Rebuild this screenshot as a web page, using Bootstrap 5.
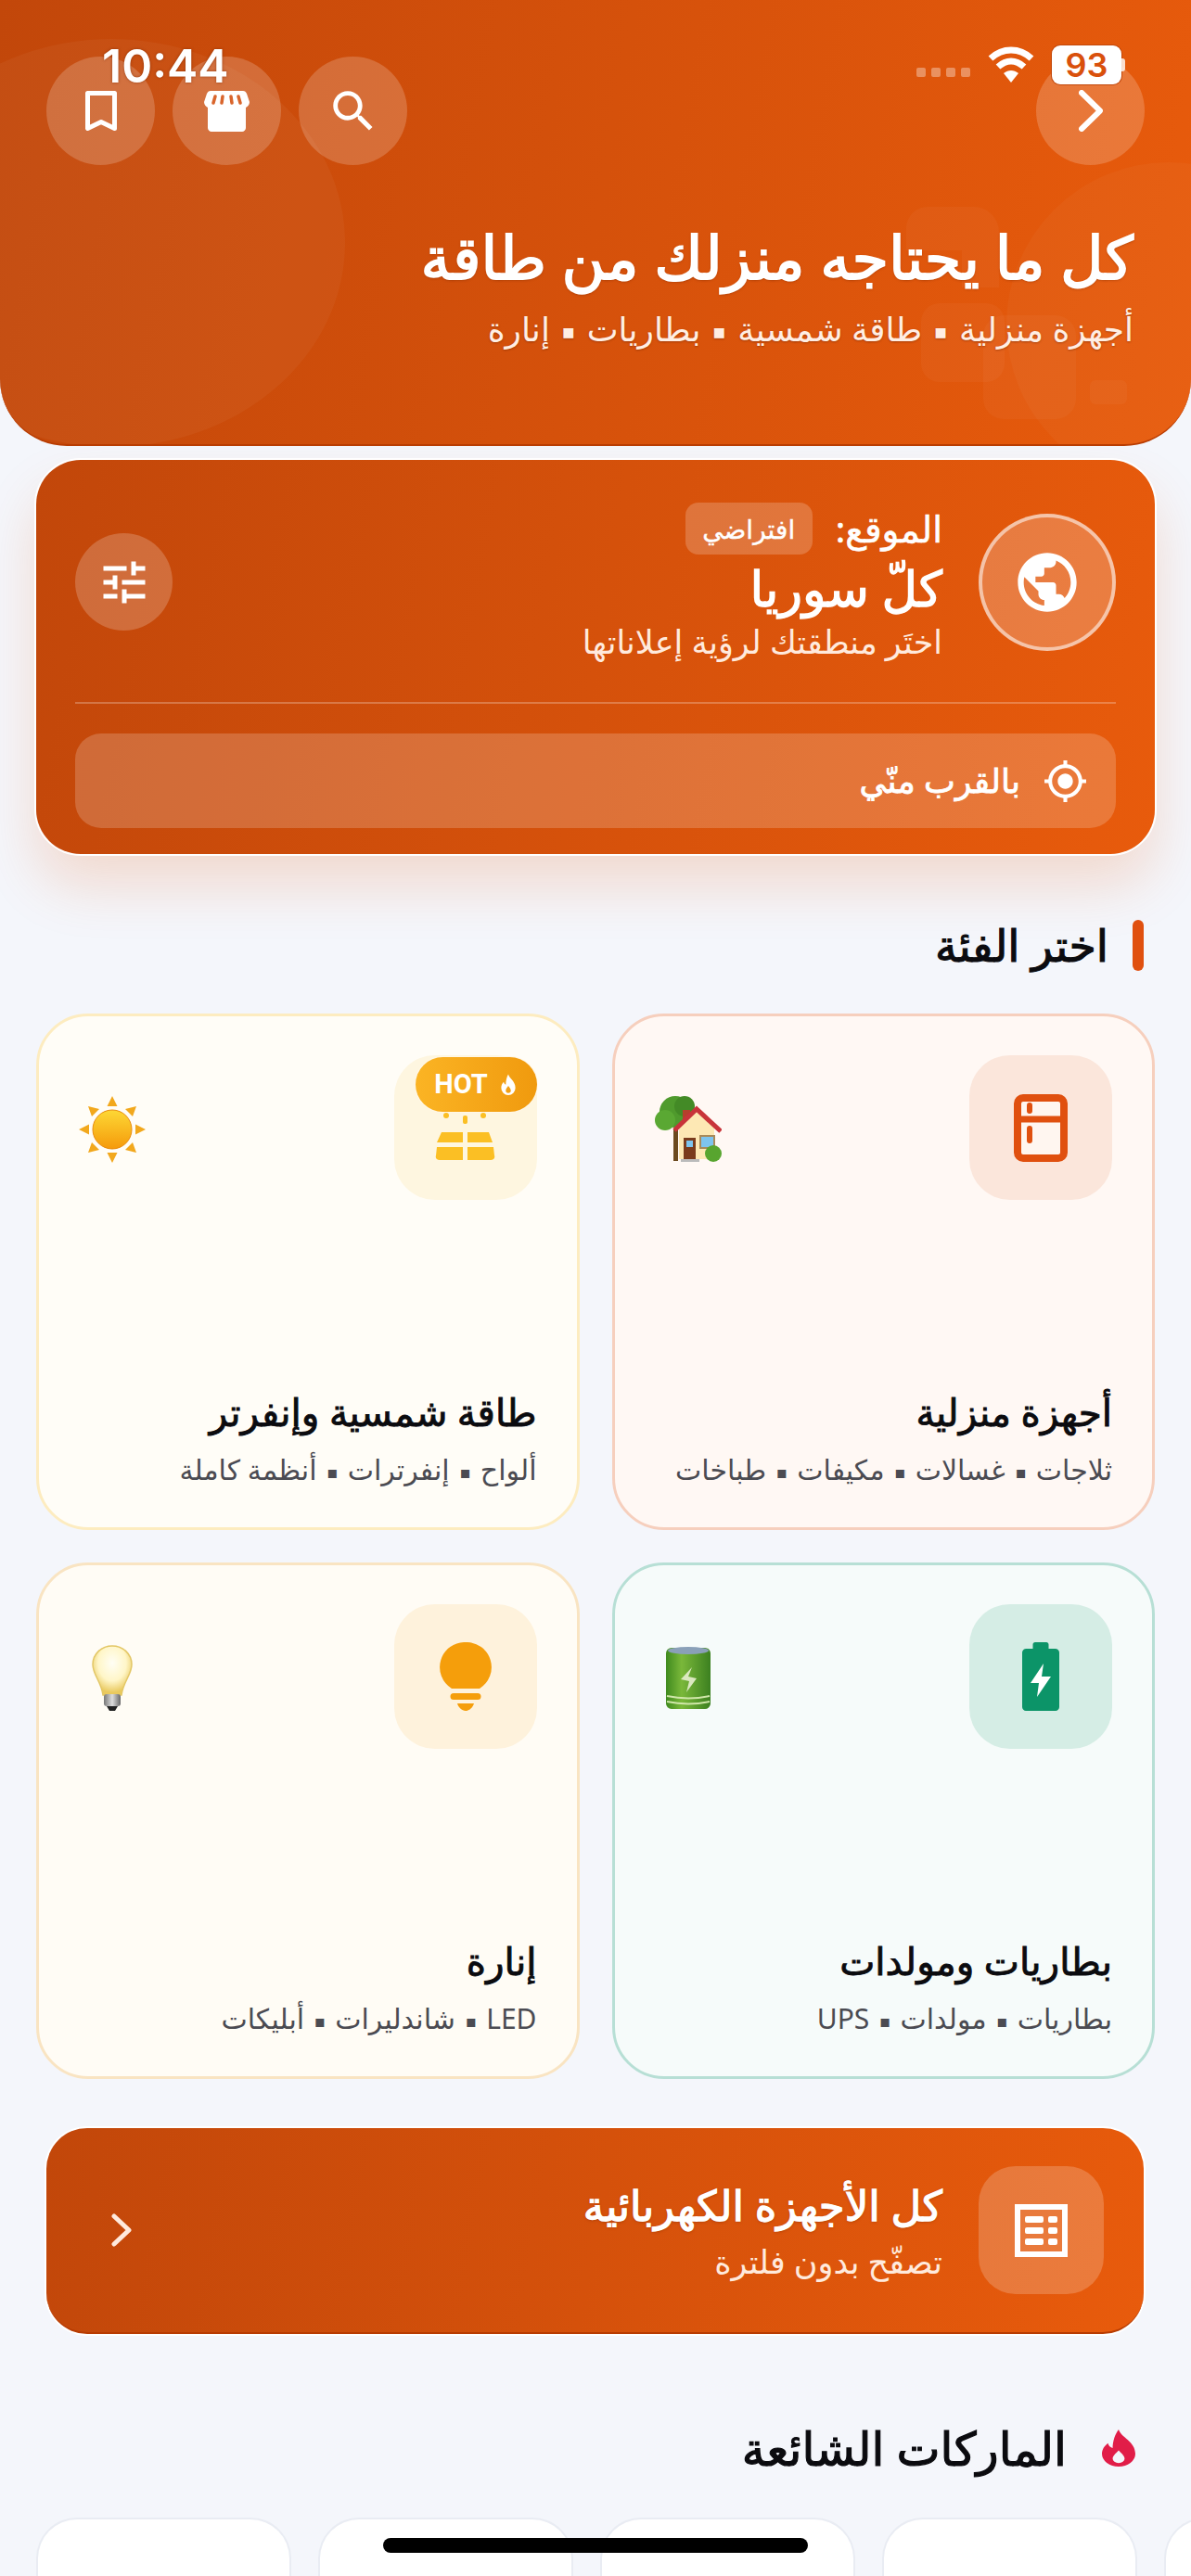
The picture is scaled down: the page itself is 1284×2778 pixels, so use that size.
<!DOCTYPE html>
<html lang="ar" dir="rtl">
<head>
    <meta charset="UTF-8">
    <meta name="viewport" content="width=device-width, initial-scale=1.0">
    <title>كل ما يحتاجه منزلك من طاقة</title>
    <link href="https://cdn.jsdelivr.net/npm/bootstrap@5.3.0/dist/css/bootstrap.min.css" rel="stylesheet">
    <style>
        html, body { height: 2778px; overflow: hidden; }
        body { background: #f4f6fb; font-family: "Noto Sans", "DejaVu Sans", sans-serif; color: #0b0b0f; position: relative; }
        .orange-grad { background: linear-gradient(100deg, #c2470a, #e85b0c); color: #fff; }
        .dot-sep { font-size: .6em; margin: 0 .15em; vertical-align: .12em; }

        .hero { height: 481px; border-radius: 0 0 72px 72px; position: relative; overflow: hidden; padding: 61px 50px 0; border-bottom: 2px solid #b83c02; }
        .hero-deco { position: absolute; inset: 0; }
        .hero > .top-btns, .hero > .hero-text { position: relative; }
        .round-btn { width: 117px; height: 117px; border-radius: 50%; background: rgba(255,255,255,.19); flex: none; }
        .top-group { gap: 19px; }
        .hero-text { margin: 58px 12px 0 0; }
        .hero-title { font-size: 64px; font-weight: 400; line-height: 82px; -webkit-text-stroke: 1.8px #fff; text-shadow: 0 1px 3px rgba(120,40,0,.6); }
        .hero-sub { font-size: 36px; line-height: 50px; margin-top: 12px; color: #ffeee3; text-shadow: 0 1px 2px rgba(120,40,0,.5); }

        .status-time { position: absolute; left: 110px; top: 41px; font-family: Inter, sans-serif; font-weight: 600; font-size: 50px; line-height: 60px; color: #fff; direction: ltr; text-shadow: 0 0 3px rgba(120,40,0,.7); z-index: 3; }
        .status-right { position: absolute; left: 988px; top: 49px; direction: ltr; z-index: 3; }
        .sig-wrap { gap: 6px; margin: 16px 19px 0 0; }
        .wifi-icon { margin-right: 19px; }
        .sig-dot { width: 10px; height: 10px; border-radius: 2px; background: rgba(255,255,255,.35); }
        .batt { width: 75px; height: 42px; background: #fff; border-radius: 9px; color: #d9500c; font-family: Inter, sans-serif; font-weight: 600; font-size: 36px; line-height: 42px; text-align: center; box-shadow: 0 0 0 1px #c2470a; }
        .batt-nub { width: 4px; height: 14px; background: rgba(255,255,255,.8); border-radius: 0 3px 3px 0; }

        .loc-card { margin: 15px 39px 0; height: 425px; border-radius: 48px; padding: 24px 42px 0; box-shadow: 0 0 0 2px #fff, 0 34px 60px rgba(232,91,12,.18); }
        .loc-row { height: 215px; margin-bottom: 22px; }
        .globe-btn { width: 148px; height: 148px; border-radius: 50%; background: rgba(255,255,255,.22); border: 4px solid rgba(255,255,255,.55); flex: none; margin-left: 39px; }
        .tune-btn { width: 105px; height: 105px; border-radius: 50%; background: rgba(255,255,255,.2); flex: none; }
        .loc-label { font-size: 39px; line-height: 56px; -webkit-text-stroke: .6px #fff; }
        .loc-chip { height: 56px; width: 137px; border-radius: 14px; background: rgba(255,255,255,.2); font-size: 28px; margin-right: 25px; -webkit-text-stroke: .4px #fff; }
        .loc-name { font-size: 53px; line-height: 72px; -webkit-text-stroke: 1.3px #fff; }
        .loc-hint { font-size: 35px; line-height: 44px; color: #ffeadd; }
        .loc-line { height: 2px; background: rgba(255,255,255,.25); }
        .near-btn { height: 102px; margin-top: 32px; border-radius: 28px; background: rgba(255,255,255,.19); padding-right: 30px; font-size: 36px; gap: 24px; -webkit-text-stroke: .8px #fff; }

        .sec-head { height: 56px; margin: 70px 51px 0 0; }
        .sec-bar { width: 12px; height: 55px; border-radius: 6px; background: #e0500f; margin-left: 26px; }
        .sec-title { font-size: 47.500px; -webkit-text-stroke: 1.1px #0b0b0f; }

        .cat-grid { display: grid; grid-template-columns: 1fr 1fr; gap: 35px; margin: 46px 39px 0; }
        .cat-card { height: 557px; border-radius: 56px; border-width: 3px; padding: 42px 43px 38px; position: relative; }
        .cat-icon { width: 154px; height: 156px; border-radius: 44px; flex: none; }
        .cat-emoji { width: 72px; height: 72px; flex: none; margin-top: 44px; }
        .cat-name { font-size: 40.500px; line-height: 52px; color: #0b0b0f; -webkit-text-stroke: .9px #0b0b0f; }
        .cat-sub { font-size: 30px; line-height: 44px; color: #4b4b52; margin-top: 14px; }
        .hot-badge { position: absolute; left: 406px; top: 44px; width: 131px; height: 59px; border-radius: 30px; background: linear-gradient(90deg, #fbb424, #f09a0e); direction: ltr; color: #fff; font-family: Roboto, sans-serif; font-weight: 700; font-size: 29px; gap: 11px; box-shadow: 0 0 0 1px #fff7e6; }

        .all-banner { margin: 53px 51px 0 50px; height: 222px; border-radius: 44px; padding: 0 43px 0 70px; box-shadow: 0 0 0 2px #fff; border-bottom: 2px solid #b83c02; }
        .all-icon { width: 135px; height: 138px; border-radius: 40px; background: rgba(255,255,255,.2); flex: none; margin-left: 39px; }
        .all-name { font-size: 45px; line-height: 58px; -webkit-text-stroke: 1.3px #fff; text-shadow: 0 1px 3px rgba(120,40,0,.5); }
        .all-hint { font-size: 35px; line-height: 44px; margin-top: 10px; color: #ffeadd; }

        .brand-head { margin: 88px 60px 0 0; height: 70px; gap: 38px; }
        .brand-title { font-size: 50px; -webkit-text-stroke: 1.2px #0b0b0f; }
        .brand-row { gap: 29px; padding-left: 39px; margin-top: 40px; }
        .brand-tile { width: 275px; height: 63px; flex: none; background: #fff; border: 2px solid #e9ecf3; border-bottom: 0; border-radius: 44px 44px 0 0; }
        .home-bar { position: absolute; left: 413px; top: 2737px; width: 458px; height: 16px; border-radius: 8px; background: #000; }
    </style>
</head>
<body>
    <div class="status-time">10:44</div>
    <div class="status-right d-flex align-items-center">
        <div class="sig-wrap d-flex"><span class="sig-dot"></span><span class="sig-dot"></span><span class="sig-dot"></span><span class="sig-dot"></span></div>
        <svg width="50" height="40" viewBox="0 0 50 40" class="wifi-icon"><path d="M3 13C16 1 34 1 47 13" fill="none" stroke="#fff" stroke-width="7"/><path d="M11 22c9-8 19-8 28 0" fill="none" stroke="#fff" stroke-width="7"/><path d="M17 29c5-4 11-4 16 0l-8 10z" fill="#fff"/></svg>
        <div class="batt">93</div><div class="batt-nub"></div>
    </div>

    <header class="hero orange-grad">
        <svg class="hero-deco" width="1284" height="481" viewBox="0 0 1284 481">
            <ellipse cx="120" cy="262" rx="252" ry="220" fill="#fff" fill-opacity=".04"/>
            <circle cx="1260" cy="350" r="175" fill="#fff" fill-opacity=".03"/>
            <g fill="#fff" fill-opacity=".035">
                <path d="M1000 223h50a27 27 0 0 1 27 27v60h-40v-40h-60v-24a23 23 0 0 1 23-23z"/>
                <rect x="993" y="327" width="90" height="85" rx="20"/>
                <rect x="1060" y="340" width="100" height="112" rx="22"/>
                <rect x="1175" y="410" width="40" height="26" rx="6"/>
            </g>
        </svg>
        <div class="top-btns d-flex justify-content-between">
            <button class="round-btn btn p-0 border-0 d-flex align-items-center justify-content-center">
                <svg width="26" height="45" viewBox="0 0 26 45"><path d="M3 3l20 19.500L3 42" fill="none" stroke="#fff" stroke-width="6" stroke-linecap="round" stroke-linejoin="round"/></svg>
            </button>
            <div class="d-flex top-group">
                <button class="round-btn btn p-0 border-0 d-flex align-items-center justify-content-center">
                    <svg width="58" height="58" viewBox="0 0 24 24"><path fill="#fff" d="M15.500 14h-.79l-.28-.27C15.410 12.590 16 11.110 16 9.500 16 5.910 13.090 3 9.500 3S3 5.910 3 9.500 5.910 16 9.500 16c1.610 0 3.090-.59 4.230-1.570l.27.28v.79l5 4.990L20.490 19l-4.990-5zm-6 0C7.010 14 5 11.990 5 9.500S7.010 5 9.500 5 14 7.010 14 9.500 11.990 14 9.500 14z"/></svg>
                </button>
                <button class="round-btn btn p-0 border-0 d-flex align-items-center justify-content-center">
                    <svg width="49" height="44" viewBox="0 0 49 44"><path fill="#fff" d="M7 0h35c2 0 3 1 4 3l3 9c0 3-2 5-4 6v22c0 2-2 4-4 4H8c-2 0-4-2-4-4V18c-2-1-4-3-4-6l3-9c1-2 2-3 4-3z"/><g stroke="#d9652c" stroke-width="3.500" stroke-linecap="round"><path d="M12 6l-2 7M20 6l-1 7M29 6l1 7M37 6l2 7"/></g></svg>
                </button>
                <button class="round-btn btn p-0 border-0 d-flex align-items-center justify-content-center">
                    <svg width="34" height="44" viewBox="0 0 34 44"><path d="M2.500 2.500h29v38l-14.500-7-14.500 7z" fill="none" stroke="#fff" stroke-width="5" stroke-linejoin="round"/></svg>
                </button>
            </div>
        </div>
        <div class="hero-text">
            <div class="hero-title">كل ما يحتاجه منزلك من طاقة</div>
            <div class="hero-sub">أجهزة منزلية <span class="dot-sep">▪</span> طاقة شمسية <span class="dot-sep">▪</span> بطاريات <span class="dot-sep">▪</span> إنارة</div>
        </div>
    </header>

    <section class="loc-card orange-grad">
        <div class="loc-row d-flex align-items-center">
            <div class="globe-btn d-flex align-items-center justify-content-center">
                <svg width="76" height="76" viewBox="0 0 24 24"><path fill="#fff" d="M12 2C6.480 2 2 6.480 2 12s4.480 10 10 10 10-4.480 10-10S17.520 2 12 2zm-1 17.930c-3.950-.49-7-3.850-7-7.930 0-.62.080-1.210.210-1.790L9 15v1c0 1.100.900 2 2 2v1.930zm6.900-2.540c-.26-.81-1-1.390-1.900-1.390h-1v-3c0-.55-.45-1-1-1H8v-2h2c.55 0 1-.45 1-1V7h2c1.100 0 2-.9 2-2v-.41c2.930 1.190 5 4.060 5 7.410 0 2.080-.8 3.970-2.100 5.390z"/></svg>
            </div>
            <div class="flex-grow-1">
                <div class="d-flex align-items-center">
                    <span class="loc-label">الموقع:</span>
                    <span class="loc-chip d-flex align-items-center justify-content-center">افتراضي</span>
                </div>
                <div class="loc-name">كلّ سوريا</div>
                <div class="loc-hint">اختَر منطقتك لرؤية إعلاناتها</div>
            </div>
            <div class="tune-btn d-flex align-items-center justify-content-center">
                <svg width="60" height="60" viewBox="0 0 24 24"><path fill="#fff" d="M3 17v2h6v-2H3zM3 5v2h10V5H3zm10 16v-2h8v-2h-8v-2h-2v6h2zM7 9v2H3v2h4v2h2V9H7zm14 4v-2H11v2h10zm-6-4h2V7h4V5h-4V3h-2v6z"/></svg>
            </div>
        </div>
        <div class="loc-line"></div>
        <div class="near-btn d-flex align-items-center">
            <svg width="49" height="49" viewBox="0 0 24 24"><path fill="#fff" d="M12 8c-2.210 0-4 1.790-4 4s1.790 4 4 4 4-1.790 4-4-1.790-4-4-4zm8.940 3c-.46-4.170-3.770-7.480-7.940-7.940V1h-2v2.060C6.830 3.520 3.520 6.830 3.060 11H1v2h2.060c.46 4.170 3.770 7.480 7.940 7.940V23h2v-2.060c4.170-.46 7.480-3.770 7.940-7.940H23v-2h-2.060zM12 19c-3.870 0-7-3.130-7-7s3.130-7 7-7 7 3.130 7 7-3.130 7-7 7z"/></svg>
            <span>بالقرب منّي</span>
        </div>
    </section>

    <div class="sec-head d-flex align-items-center">
        <span class="sec-bar"></span>
        <span class="sec-title">اختر الفئة</span>
    </div>

    <div class="cat-grid">
        <div class="cat-card card" style="background:#fff8f4;border-color:#f6cfbd">
            <div class="d-flex justify-content-between align-items-start">
                <div class="cat-icon d-flex align-items-center justify-content-center" style="background:#fbe6db">
                    <svg width="58" height="73" viewBox="0 0 58 73"><rect x="4" y="4" width="50" height="65" rx="6" fill="#fff6f0" stroke="#e0500f" stroke-width="8"/><path d="M4 27h50" stroke="#e0500f" stroke-width="7"/><path d="M17 12v6M17 37v13" stroke="#e0500f" stroke-width="6" stroke-linecap="round"/></svg>
                </div>
                <svg class="cat-emoji" viewBox="0 0 72 72"><rect x="20" y="36" width="5" height="34" fill="#6b4a1e"/><circle cx="22" cy="17" r="17" fill="#4f9a2d"/><circle cx="11" cy="26" r="11" fill="#5aa833"/><circle cx="32" cy="11" r="11" fill="#438a26"/><rect x="30" y="15" width="8" height="12" fill="#b5402c"/><path d="M26 68V34l19-18 19 18v34z" fill="#fde8b4"/><path d="M21 37L45 14l26 24" fill="none" stroke="#c8343a" stroke-width="5"/><rect x="31" y="45" width="13" height="24" fill="#7a3b1c"/><rect x="34" y="48" width="7" height="7" fill="#7ec4ee"/><rect x="49" y="43" width="15" height="13" fill="#7ec4ee" stroke="#a98a5a" stroke-width="2"/><circle cx="63" cy="62" r="9" fill="#58a52f"/><rect x="28" y="68" width="20" height="3" fill="#bbb"/></svg>
            </div>
            <div class="mt-auto">
                <div class="cat-name">أجهزة منزلية</div>
                <div class="cat-sub">ثلاجات <span class="dot-sep">▪</span> غسالات <span class="dot-sep">▪</span> مكيفات <span class="dot-sep">▪</span> طباخات</div>
            </div>
        </div>
        <div class="cat-card card" style="background:#fffdf7;border-color:#fdecc0">
            <div class="d-flex justify-content-between align-items-start">
                <div class="cat-icon d-flex align-items-end justify-content-center" style="background:#fef6e0">
                    <svg width="68" height="60" viewBox="0 0 68 60" style="margin-bottom:40px"><g fill="#fbbf24"><circle cx="13" cy="9" r="3"/><circle cx="53" cy="9" r="3"/><rect x="31" y="9" width="5" height="9" rx="2"/><path d="M8 27h23v11H3zM36 27h23l4 11H36zM3 43h28v14H6c-3 0-5-2-4-5zM36 43h28l1 9c1 3-1 5-4 5H36z"/></g></svg>
                </div>
                <svg class="cat-emoji" viewBox="0 0 72 72"><defs><linearGradient id="sunG" x1="0" y1="0" x2="0" y2="1"><stop offset="0" stop-color="#fdd835"/><stop offset="1" stop-color="#f59a0b"/></linearGradient></defs><circle cx="36" cy="36" r="21" fill="url(#sunG)" stroke="#e98b0a" stroke-width="1"/><g fill="#f2a81d"><path d="M36 0l5.500 11h-11zM36 72l-5.500-11h11zM0 36l11-5.500v11zM72 36l-11 5.500v-11zM10 11l12 3-8 8zM62 11l-4 11-8-8zM10 61l4-11 8 8zM62 61l-12-3 8-8z"/></g></svg>
            </div>
            <div class="hot-badge d-flex align-items-center justify-content-center">
                <span>HOT</span>
                <svg width="22" height="24" viewBox="3 1 18 22"><path fill="#fff" fill-rule="evenodd" d="M12 1.500C13 6 19 8 19 15a7 7 0 0 1-14 0c0-2.500 1-4.500 2.500-6 .3 1.500 1 2.300 2 2.800C9.500 8 10.500 4 12 1.500zM12 13c-1.500 2-2.500 3.200-2.500 4.600a2.500 2.500 0 0 0 5 0c0-1.400-1-2.600-2.500-4.600z"/></svg>
            </div>
            <div class="mt-auto">
                <div class="cat-name">طاقة شمسية وإنفرتر</div>
                <div class="cat-sub">ألواح <span class="dot-sep">▪</span> إنفرترات <span class="dot-sep">▪</span> أنظمة كاملة</div>
            </div>
        </div>
        <div class="cat-card card" style="background:#f6fbfa;border-color:#b7dfd5">
            <div class="d-flex justify-content-between align-items-start">
                <div class="cat-icon d-flex align-items-center justify-content-center" style="background:#d5ede5">
                    <svg width="40" height="74" viewBox="0 0 40 74"><path fill="#0c9468" d="M14 0h12c1.500 0 2.500 1 2.500 2.500V7H36c2 0 4 2 4 4v59c0 2-2 4-4 4H4c-2 0-4-2-4-4V11c0-2 2-4 4-4h7.500V2.500C11.500 1 12.500 0 14 0z"/><path fill="#fff" d="M23 23L9 44h9l-2 15 15-22h-10z"/></svg>
                </div>
                <svg class="cat-emoji" viewBox="0 0 72 72"><defs><linearGradient id="battG" x1="0" y1="0" x2="1" y2="0"><stop offset="0" stop-color="#3f8a1e"/><stop offset=".35" stop-color="#7ab83a"/><stop offset="1" stop-color="#3c8020"/></linearGradient></defs><rect x="12" y="3" width="48" height="66" rx="6" fill="url(#battG)"/><ellipse cx="36" cy="6" rx="22" ry="4" fill="#8aa0b8"/><path d="M40 24L28 37l9 2-3 12 11-15-9-2z" fill="#dbe8c0"/><path d="M13 55c14 3 32 3 46 0M13 61c14 3 32 3 46 0" stroke="#cfe6a8" stroke-width="2" fill="none"/></svg>
            </div>
            <div class="mt-auto">
                <div class="cat-name">بطاريات ومولدات</div>
                <div class="cat-sub">بطاريات <span class="dot-sep">▪</span> مولدات <span class="dot-sep">▪</span> UPS</div>
            </div>
        </div>
        <div class="cat-card card" style="background:#fffcf5;border-color:#f9e4c2">
            <div class="d-flex justify-content-between align-items-start">
                <div class="cat-icon d-flex align-items-center justify-content-center" style="background:#fef2dc">
                    <svg width="56" height="74" viewBox="0 0 56 74"><path fill="#f59e0b" d="M28 0a27 27 0 0 1 15 50H13A27 27 0 0 1 28 0zM15 55h26a3 3 0 0 1 0 7H15a3 3 0 0 1 0-7zM19 66h18c-1 4-5 8-9 8s-8-4-9-8z"/></svg>
                </div>
                <svg class="cat-emoji" viewBox="0 0 72 72"><defs><radialGradient id="bulbG" cx=".5" cy=".35" r=".6"><stop offset="0" stop-color="#fffef5"/><stop offset=".6" stop-color="#fff6c8"/><stop offset="1" stop-color="#e9c95e"/></radialGradient><linearGradient id="capG" x1="0" x2="1" y1="0" y2="0"><stop offset="0" stop-color="#777"/><stop offset=".5" stop-color="#ddd"/><stop offset="1" stop-color="#666"/></linearGradient></defs><path d="M36 1c12 0 21 9 21 20 0 11-9 18-11 33H26C24 39 15 32 15 21 15 10 24 1 36 1z" fill="url(#bulbG)" stroke="#e3c766" stroke-width="1.500"/><rect x="27" y="53" width="18" height="13" rx="3" fill="url(#capG)"/><path d="M30 66h12l-3 5h-6z" fill="#222"/></svg>
            </div>
            <div class="mt-auto">
                <div class="cat-name">إنارة</div>
                <div class="cat-sub">LED <span class="dot-sep">▪</span> شاندليرات <span class="dot-sep">▪</span> أبليكات</div>
            </div>
        </div>
    </div>

    <div class="all-banner orange-grad d-flex align-items-center">
        <div class="all-icon d-flex align-items-center justify-content-center">
            <svg width="57" height="57" viewBox="0 0 57 57" fill="#fff"><path fill-rule="evenodd" d="M0 0h57v57H0zM6 6v45h45V6z"/><rect x="11" y="13" width="20" height="7" rx="2"/><rect x="36" y="13" width="10" height="7" rx="2"/><rect x="11" y="25" width="20" height="7" rx="2"/><rect x="36" y="25" width="10" height="7" rx="2"/><rect x="11" y="37" width="20" height="7" rx="2"/><rect x="36" y="37" width="10" height="7" rx="2"/></svg>
        </div>
        <div class="flex-grow-1">
            <div class="all-name">كل الأجهزة الكهربائية</div>
            <div class="all-hint">تصفّح بدون فلترة</div>
        </div>
        <svg width="22" height="36" viewBox="0 0 22 36"><path d="M3 3l16 15L3 33" fill="none" stroke="#ffeadd" stroke-width="5" stroke-linecap="round" stroke-linejoin="round"/></svg>
    </div>

    <div class="brand-head d-flex align-items-center">
        <svg width="36" height="40" viewBox="5 1.500 14 20.500" preserveAspectRatio="none"><path fill="#e11d48" fill-rule="evenodd" d="M12 1.500C13 6 19 8 19 15a7 7 0 0 1-14 0c0-2.500 1-4.500 2.500-6 .3 1.500 1 2.300 2 2.800C9.500 8 10.500 4 12 1.500zM12 13c-1.500 2-2.500 3.200-2.500 4.600a2.500 2.500 0 0 0 5 0c0-1.400-1-2.600-2.500-4.600z"/></svg>
        <span class="brand-title">الماركات الشائعة</span>
    </div>

    <div class="brand-row d-flex overflow-hidden" dir="ltr">
        <div class="brand-tile"></div>
        <div class="brand-tile"></div>
        <div class="brand-tile"></div>
        <div class="brand-tile"></div>
        <div class="brand-tile"></div>
    </div>

    <div class="home-bar"></div>

    <script src="https://cdn.jsdelivr.net/npm/bootstrap@5.3.0/dist/js/bootstrap.bundle.min.js"></script>
</body>
</html>
